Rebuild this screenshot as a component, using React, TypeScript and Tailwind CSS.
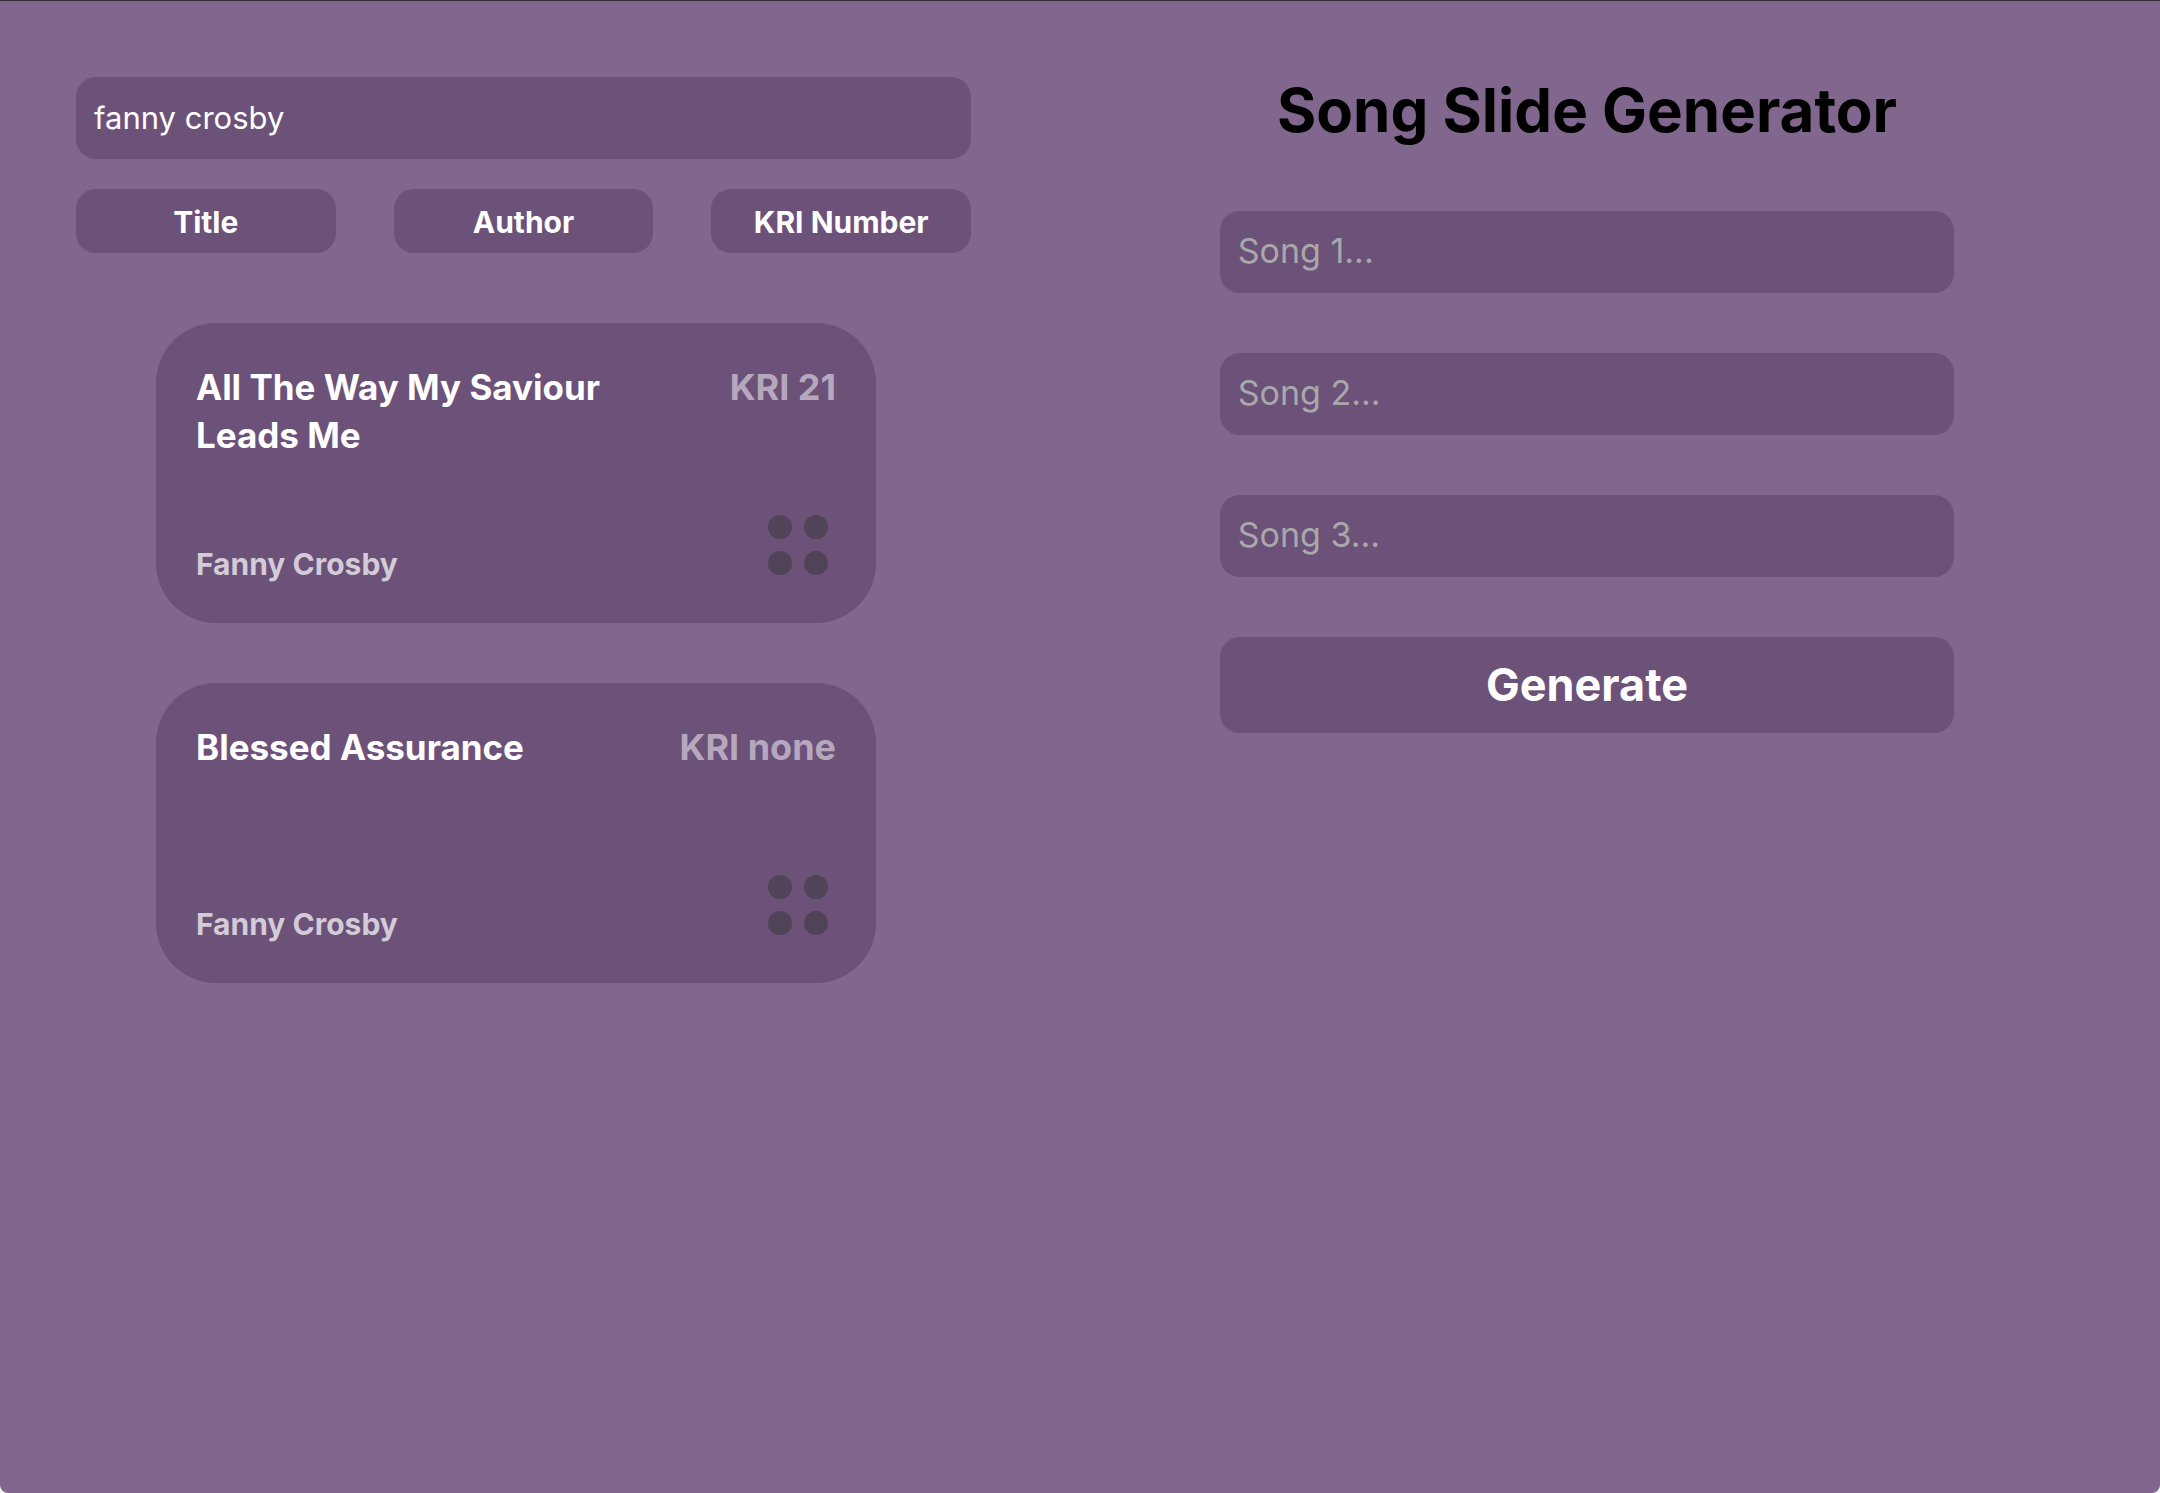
type Song = { title: string; author: string; kri: string };

const songs: Song[] = [
  { title: "All The Way My Saviour Leads Me", author: "Fanny Crosby", kri: "KRI 21" },
  { title: "Blessed Assurance", author: "Fanny Crosby", kri: "KRI none" },
];

const filters = ["Title", "Author", "KRI Number"];
const slots = ["Song 1...", "Song 2...", "Song 3..."];

function DragHandle() {
  return (
    <button type="button" aria-label="Drag song" className="m-2 grid cursor-grab grid-cols-2 gap-3">
      {[0, 1, 2, 3].map((i) => (
        <span key={i} className="size-6 rounded-full bg-[#514358]" />
      ))}
    </button>
  );
}

function SongCard({ song }: { song: Song }) {
  return (
    <li className="flex min-h-[300px] w-full max-w-[720px] flex-col justify-between rounded-[60px] bg-[#6c5179] p-10 font-bold">
      <div className="flex items-start justify-between leading-[48px]">
        <h2 className="max-w-[70%] text-[35px] text-white">{song.title}</h2>
        <span className="text-[36px] whitespace-nowrap text-[#b6a8bc]">{song.kri}</span>
      </div>
      <div className="flex items-end justify-between">
        <p className="text-[30px] leading-[38px] text-[#d3cbd7]">{song.author}</p>
        <DragHandle />
      </div>
    </li>
  );
}

export default function App() {
  return (
    <div className="bg-white font-['Inter',sans-serif]">
      <div className="flex min-h-screen rounded-b-lg border-t border-[#352d39] bg-[#81678d]">
        <section aria-label="Song search" className="min-w-0 flex-1 px-[76px] pt-[76px]">
          <input
            type="text"
            aria-label="Search songs"
            defaultValue="fanny crosby"
            className="block h-[82px] w-full rounded-[20px] bg-[#6c5179] px-[18px] pb-[2px] text-[31px] text-white outline-none"
          />
          <div className="mt-[30px] flex justify-between">
            {filters.map((f) => (
              <button
                key={f}
                type="button"
                className="h-16 w-[29%] rounded-[20px] bg-[#6c5179] pt-[2px] text-[30px] font-bold text-white"
              >
                {f}
              </button>
            ))}
          </div>
          <ul className="mt-[70px] flex flex-col items-center gap-[60px] pr-[15px]">
            {songs.map((s) => (
              <SongCard key={s.title} song={s} />
            ))}
          </ul>
        </section>

        <section aria-label="Slide generator" className="mr-[33px] w-1/2 pt-[76px]">
          <form className="mx-auto flex w-[68%] flex-col">
            <h1 className="mb-[68px] text-center text-[60px] leading-[66px] font-bold whitespace-nowrap text-black">
              Song Slide Generator
            </h1>
            <div className="flex flex-col gap-[60px]">
              {slots.map((s) => (
                <input
                  key={s}
                  type="text"
                  aria-label={s}
                  placeholder={s}
                  className="h-[82px] w-full rounded-[20px] bg-[#6c5179] px-[18px] pb-[4px] text-[34px] text-white outline-none placeholder:text-[#a9a9a9]"
                />
              ))}
              <button
                type="button"
                className="h-24 w-full rounded-[20px] bg-[#6c5179] text-[45px] font-bold text-white"
              >
                Generate
              </button>
            </div>
          </form>
        </section>
      </div>
    </div>
  );
}
